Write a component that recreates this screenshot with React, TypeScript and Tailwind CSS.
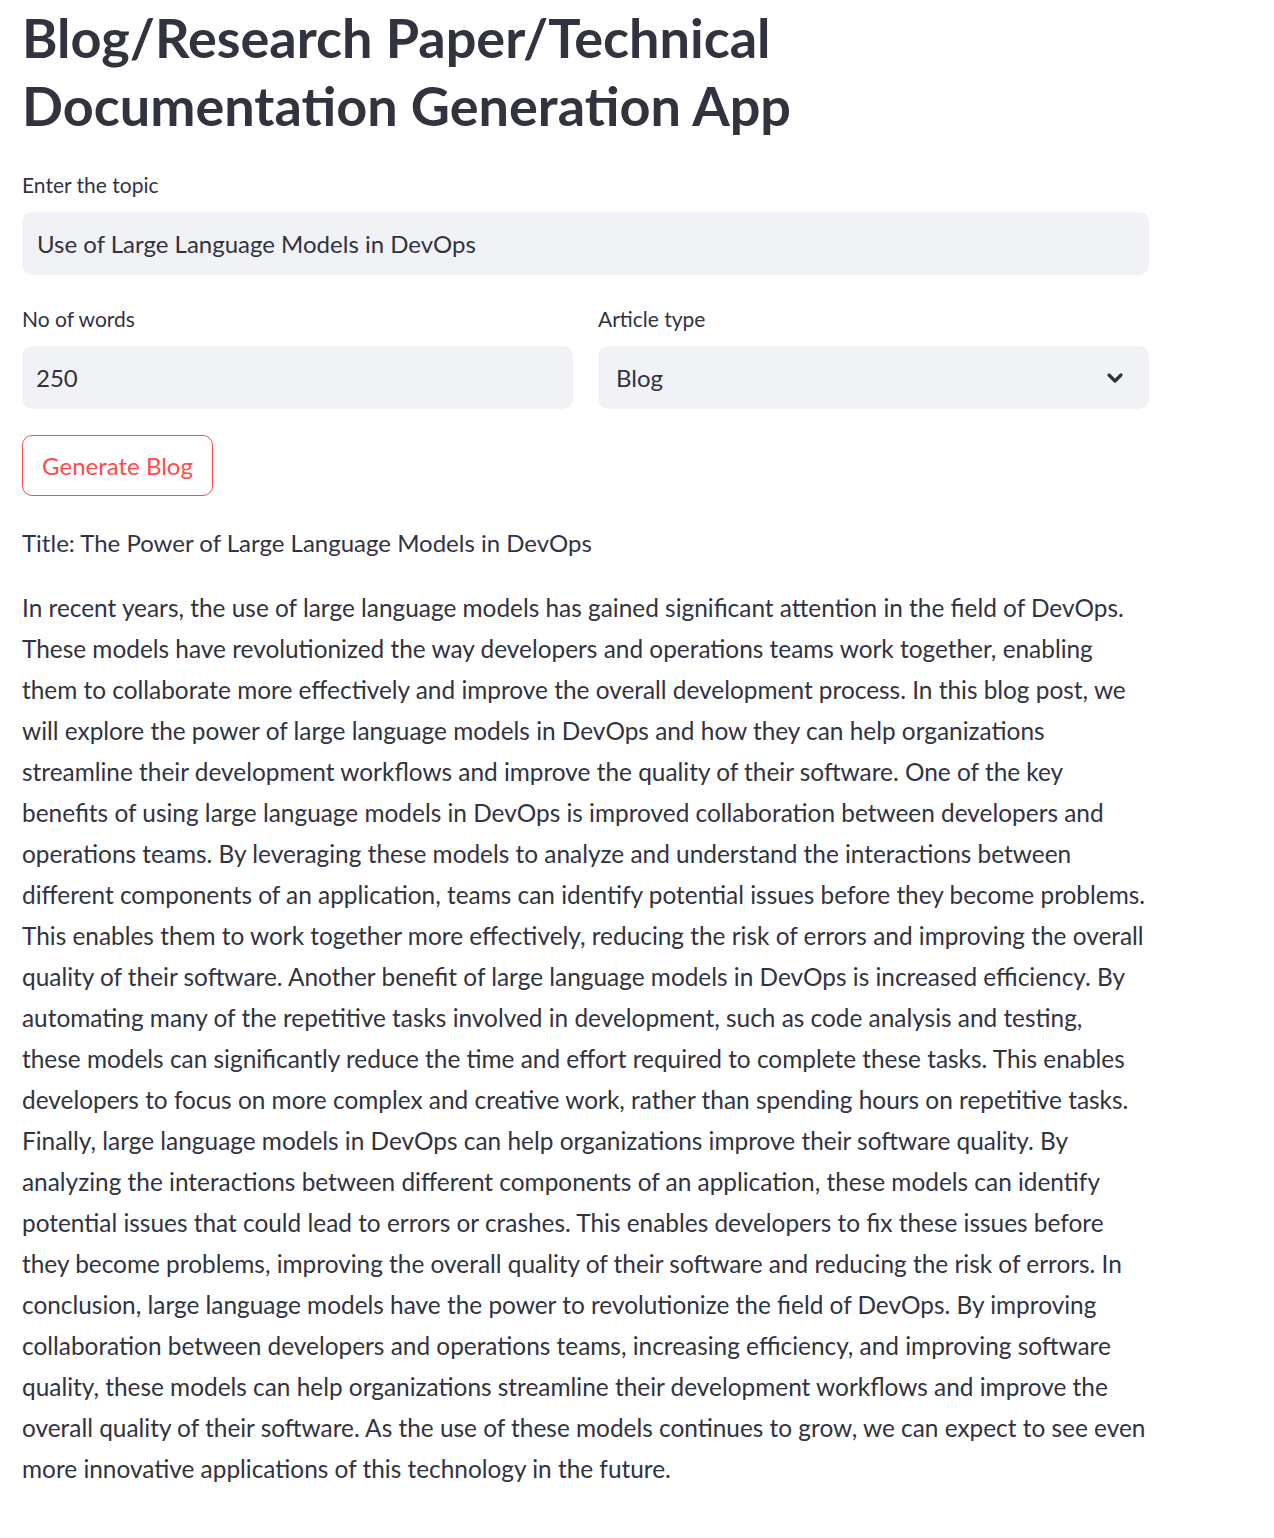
import { ChevronDown } from 'lucide-react';

const lines = [
  "In recent years, the use of large language models has gained significant attention in the field of DevOps.",
  "These models have revolutionized the way developers and operations teams work together, enabling",
  "them to collaborate more effectively and improve the overall development process. In this blog post, we",
  "will explore the power of large language models in DevOps and how they can help organizations",
  "streamline their development workflows and improve the quality of their software. One of the key",
  "benefits of using large language models in DevOps is improved collaboration between developers and",
  "operations teams. By leveraging these models to analyze and understand the interactions between",
  "different components of an application, teams can identify potential issues before they become problems.",
  "This enables them to work together more effectively, reducing the risk of errors and improving the overall",
  "quality of their software. Another benefit of large language models in DevOps is increased efficiency. By",
  "automating many of the repetitive tasks involved in development, such as code analysis and testing,",
  "these models can significantly reduce the time and effort required to complete these tasks. This enables",
  "developers to focus on more complex and creative work, rather than spending hours on repetitive tasks.",
  "Finally, large language models in DevOps can help organizations improve their software quality. By",
  "analyzing the interactions between different components of an application, these models can identify",
  "potential issues that could lead to errors or crashes. This enables developers to fix these issues before",
  "they become problems, improving the overall quality of their software and reducing the risk of errors. In",
  "conclusion, large language models have the power to revolutionize the field of DevOps. By improving",
  "collaboration between developers and operations teams, increasing efficiency, and improving software",
  "quality, these models can help organizations streamline their development workflows and improve the",
  "overall quality of their software. As the use of these models continues to grow, we can expect to see even",
  "more innovative applications of this technology in the future.",
];

export default function App() {
  return (
    <main className="min-h-screen bg-white text-[#31333f] font-['Lato',sans-serif]">
      <div className="w-[1127px] ml-[22px] pt-[4px]">
        <h1 className="text-[54px] leading-[68px] font-bold">
          Blog/Research Paper/Technical
          <br />
          Documentation Generation App
        </h1>

        <label className="block mt-[31px] text-[21px] leading-[28px]">Enter the topic</label>
        <div className="mt-[13px] h-[63px] rounded-[10px] bg-[#f0f2f6] px-[15px] flex items-center text-[24px]">
          Use of Large Language Models in DevOps
        </div>

        <div className="mt-[30px] grid grid-cols-2 gap-[25px]">
          <div>
            <label className="block text-[21px] leading-[28px]">No of words</label>
            <div className="mt-[13px] h-[63px] rounded-[10px] bg-[#f0f2f6] px-[14px] flex items-center text-[24px]">
              250
            </div>
          </div>
          <div>
            <label className="block text-[21px] leading-[28px]">Article type</label>
            <div className="mt-[13px] h-[63px] rounded-[10px] bg-[#f0f2f6] pl-[18px] pr-[22px] flex items-center justify-between text-[24px]">
              <span>Blog</span>
              <ChevronDown className="w-[24px] h-[24px]" strokeWidth={3.2} />
            </div>
          </div>
        </div>

        <button className="mt-[26px] h-[61px] w-[191px] rounded-[10px] border border-[#ff4b4b] text-[#ff4b4b] text-[24px] bg-white">
          Generate Blog
        </button>

        <p className="mt-[26px] text-[24px] leading-[41px]">Title: The Power of Large Language Models in DevOps</p>

        <p className="mt-[24px] text-[24.4px] leading-[41px]">
          {lines.map((l, i) => (
            <span key={i} className="block whitespace-nowrap">{l}</span>
          ))}
        </p>
      </div>
    </main>
  );
}
